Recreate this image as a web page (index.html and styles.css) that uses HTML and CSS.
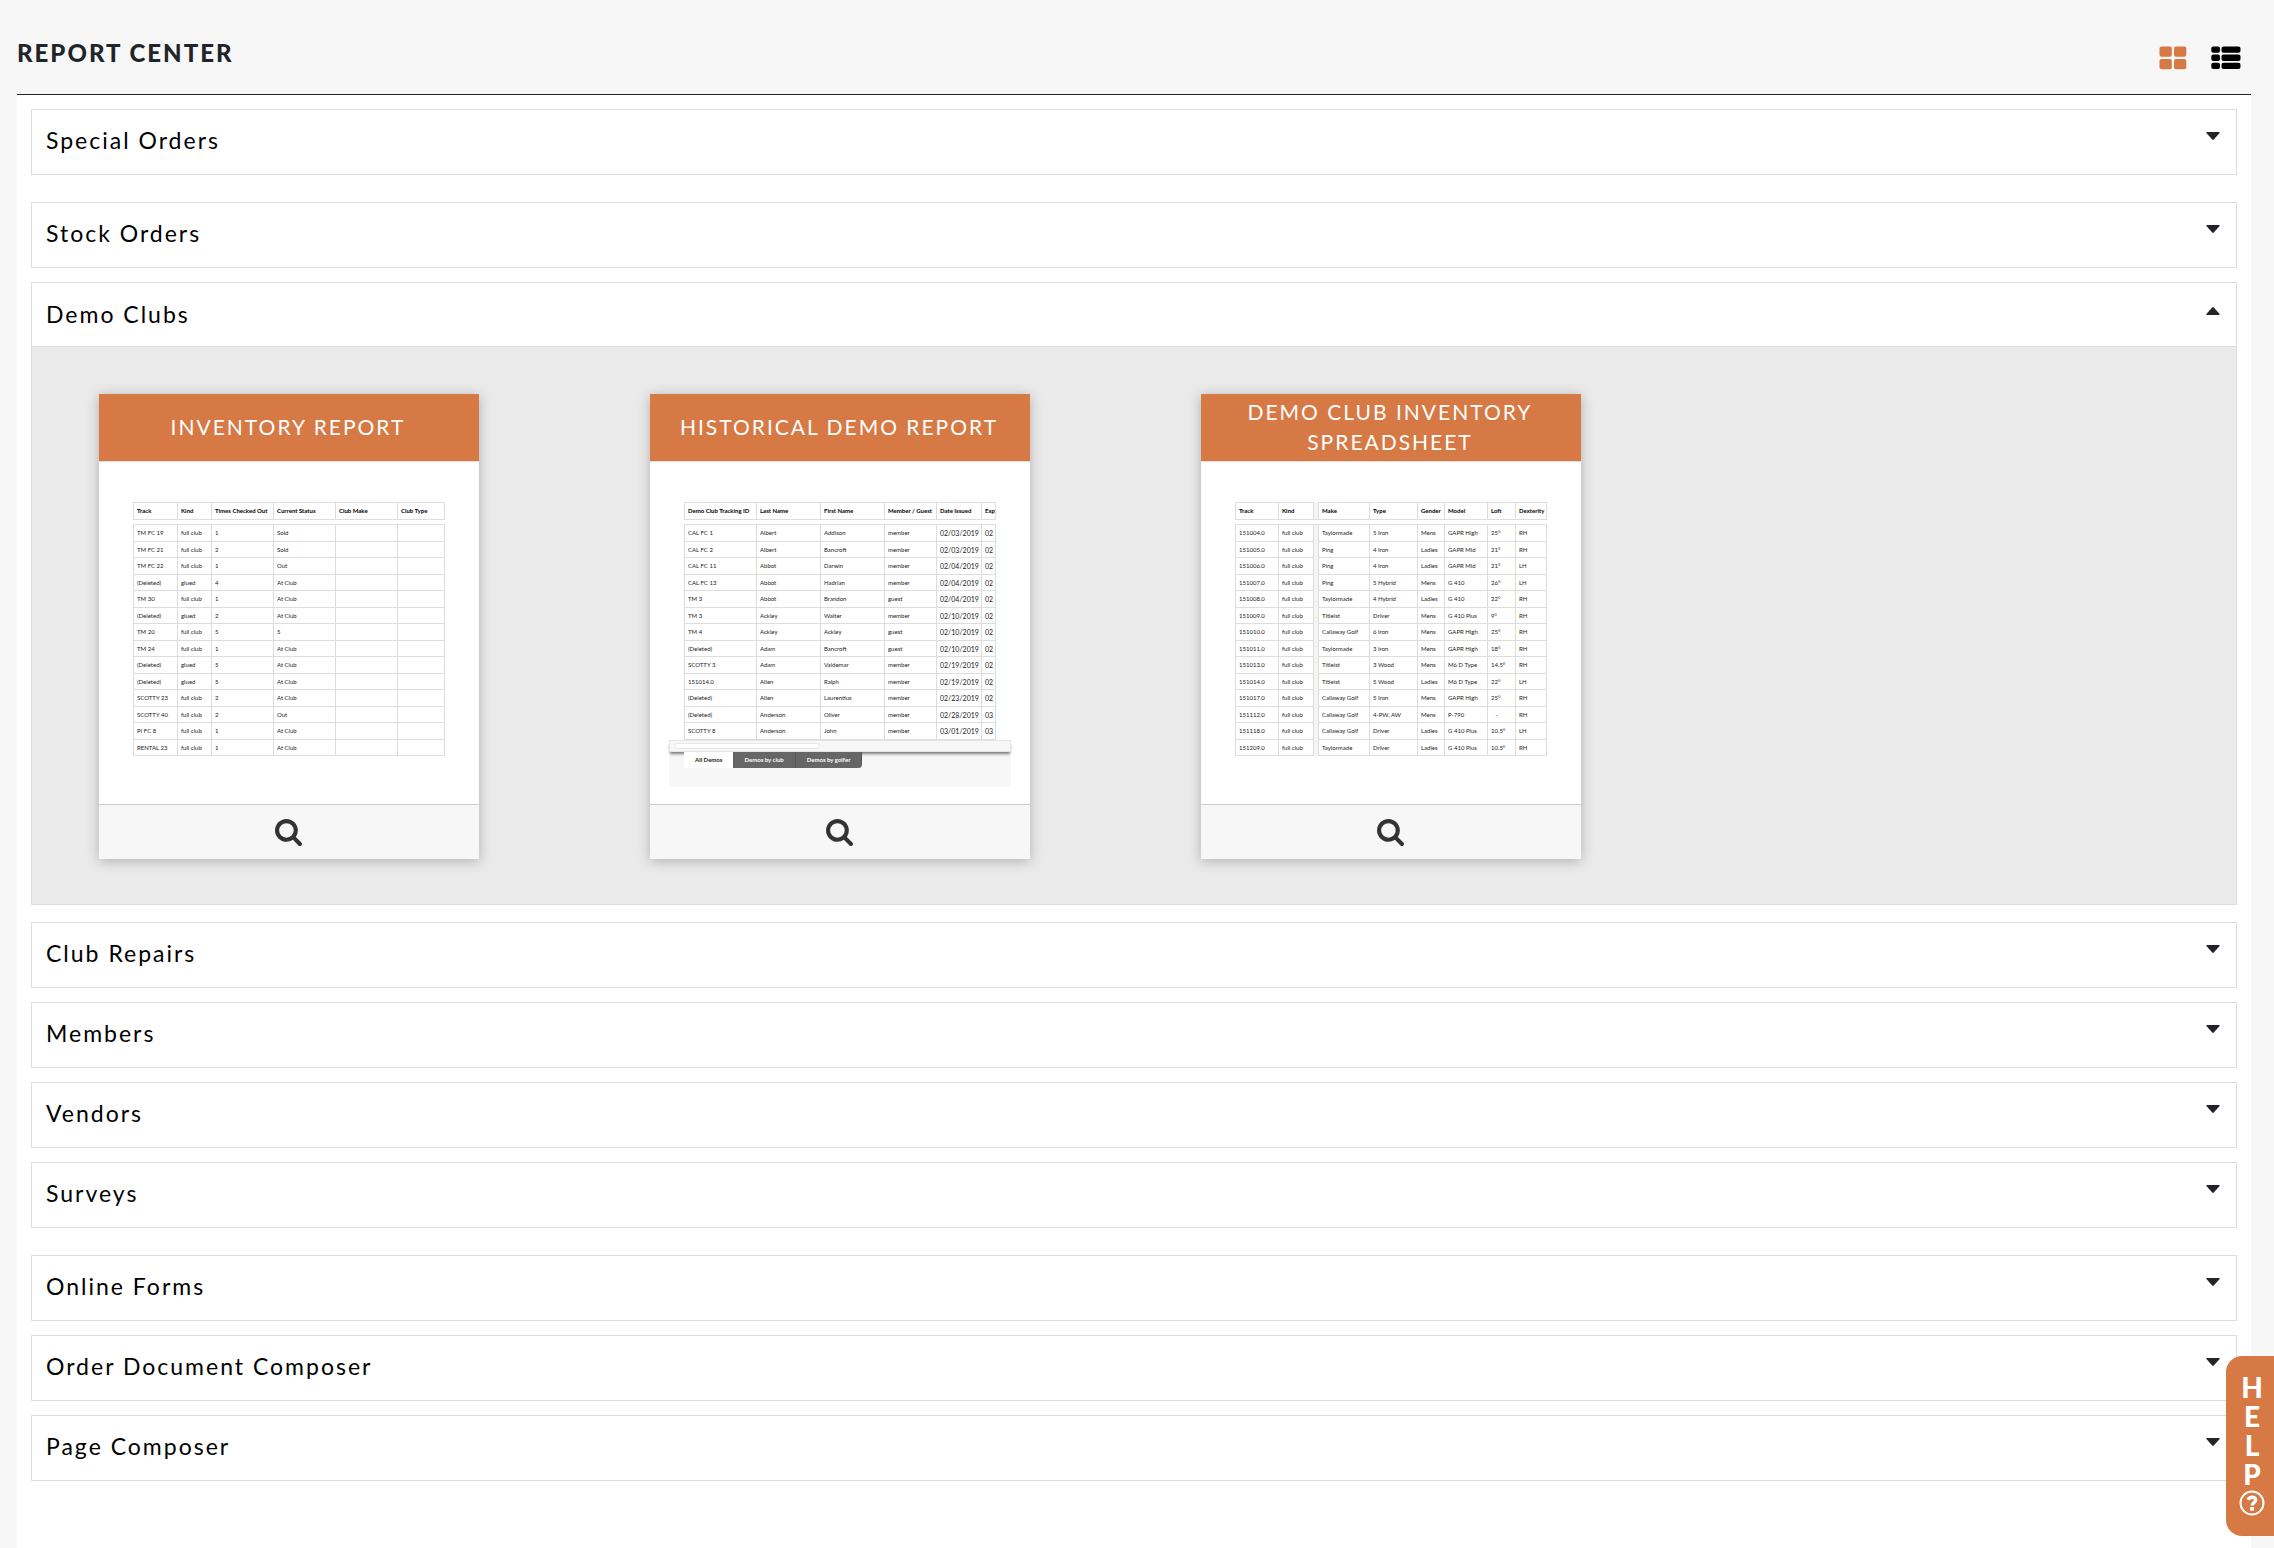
FILE: index.html
```html
<!DOCTYPE html>
<html lang="en">
<head>
<meta charset="utf-8">
<meta name="viewport" content="width=device-width, initial-scale=1">
<title>Report Center</title>
<link rel="stylesheet" href="styles.css">
</head>
<body>
<svg class="sprite" aria-hidden="true">
  <symbol id="caret-down" viewBox="0 0 14 9"><path d="M1 0h12q1 0 .6 1L7.800 7.600q-.8.8-1.600 0L.4 1Q0 0 1 0z"/></symbol>
  <symbol id="caret-up" viewBox="0 0 14 9"><path d="M1 9h12q1 0 .6-1L7.800 1.400q-.8-.8-1.600 0L.4 8Q0 9 1 9z"/></symbol>
  <symbol id="search" viewBox="0 0 1664 1664"><path d="M1152 704q0-185-131.500-316.500t-316.500-131.500-316.500 131.500-131.500 316.500 131.500 316.500 316.500 131.500 316.500-131.500 131.500-316.500zm512 832q0 52-38 90t-90 38q-54 0-90-38l-343-342q-179 124-399 124-143 0-273.500-55.500t-225-150-150-225-55.500-273.500 55.500-273.500 150-225 225-150 273.500-55.500 273.500 55.500 225 150 150 225 55.500 273.500q0 220-124 399l343 343q37 37 37 90z"/></symbol>
</svg>
<main class="page">
  <header class="page-header">
    <h1>REPORT CENTER</h1>
    <div class="views">
      <button class="view view-active" type="button" aria-label="Grid view">
        <svg width="28" height="24" viewBox="0 0 28 24"><rect x=".5" y=".5" width="12.300" height="10.300" rx="2"/><rect x="15" y=".5" width="12.300" height="10.300" rx="2"/><rect x=".5" y="13" width="12.300" height="10.300" rx="2"/><rect x="15" y="13" width="12.300" height="10.300" rx="2"/></svg>
      </button>
      <button class="view" type="button" aria-label="List view">
        <svg width="30" height="24" viewBox="0 0 30 24"><rect x=".3" y=".5" width="8.700" height="6.300" rx="2"/><rect x="10.500" y=".5" width="19" height="6.300" rx="2"/><rect x=".3" y="8.600" width="8.700" height="6.300" rx="2"/><rect x="10.500" y="8.600" width="19" height="6.300" rx="2"/><rect x=".3" y="16.800" width="8.700" height="6.300" rx="2"/><rect x="10.500" y="16.800" width="19" height="6.300" rx="2"/></svg>
      </button>
    </div>
  </header>
  <div class="sections">
    <section class="section group-end"><button class="toggle" type="button" aria-expanded="false">Special Orders<svg class="caret"><use href="#caret-down"/></svg></button></section>
    <section class="section"><button class="toggle" type="button" aria-expanded="false">Stock Orders<svg class="caret"><use href="#caret-down"/></svg></button></section>
    <section class="section section-open">
      <button class="toggle" type="button" aria-expanded="true">Demo Clubs<svg class="caret"><use href="#caret-up"/></svg></button>
      <div class="reports">
        <article class="card">
          <h2>INVENTORY REPORT</h2>
          <div class="preview">
            <table class="sheet inventory">
              <colgroup><col><col><col><col><col><col></colgroup>
              <thead><tr><th>Track<th>Kind<th>Times Checked Out<th>Current Status<th>Club Make<th>Club Type</thead>
              <tbody class="spacer"><tr><td colspan="6"></tbody>
              <tbody>
                <tr><td>TM FC 19<td>full club<td>1<td>Sold<td><td>
                <tr><td>TM FC 21<td>full club<td>2<td>Sold<td><td>
                <tr><td>TM FC 22<td>full club<td>1<td>Out<td><td>
                <tr><td>(Deleted)<td>glued<td>4<td>At Club<td><td>
                <tr><td>TM 30<td>full club<td>1<td>At Club<td><td>
                <tr><td>(Deleted)<td>glued<td>2<td>At Club<td><td>
                <tr><td>TM 20<td>full club<td>5<td>5<td><td>
                <tr><td>TM 24<td>full club<td>1<td>At Club<td><td>
                <tr><td>(Deleted)<td>glued<td>5<td>At Club<td><td>
                <tr><td>(Deleted)<td>glued<td>5<td>At Club<td><td>
                <tr><td>SCOTTY 23<td>full club<td>2<td>At Club<td><td>
                <tr><td>SCOTTY 40<td>full club<td>2<td>Out<td><td>
                <tr><td>PI FC 8<td>full club<td>1<td>At Club<td><td>
                <tr><td>RENTAL 23<td>full club<td>1<td>At Club<td><td>
              </tbody>
            </table>
          </div>
          <button class="open" type="button" aria-label="View inventory report"><svg class="lens"><use href="#search"/></svg></button>
        </article>
        <article class="card">
          <h2>HISTORICAL DEMO REPORT</h2>
          <div class="preview">
            <table class="sheet history">
              <colgroup><col><col><col><col><col><col></colgroup>
              <thead><tr><th>Demo Club Tracking ID<th>Last Name<th>First Name<th>Member / Guest<th>Date Issued<th>Exp</thead>
              <tbody class="spacer"><tr><td colspan="6"></tbody>
              <tbody>
                <tr><td>CAL FC 1<td>Albert<td>Addison<td>member<td>02/03/2019<td>02
                <tr><td>CAL FC 2<td>Albert<td>Bancroft<td>member<td>02/03/2019<td>02
                <tr><td>CAL FC 11<td>Abbot<td>Darwin<td>member<td>02/04/2019<td>02
                <tr><td>CAL FC 13<td>Abbot<td>Hadrian<td>member<td>02/04/2019<td>02
                <tr><td>TM 3<td>Abbot<td>Brandon<td>guest<td>02/04/2019<td>02
                <tr><td>TM 3<td>Ackley<td>Walter<td>member<td>02/10/2019<td>02
                <tr><td>TM 4<td>Ackley<td>Ackley<td>guest<td>02/10/2019<td>02
                <tr><td>(Deleted)<td>Adam<td>Bancroft<td>guest<td>02/10/2019<td>02
                <tr><td>SCOTTY 3<td>Adam<td>Valdemar<td>member<td>02/19/2019<td>02
                <tr><td>151014.0<td>Allen<td>Ralph<td>member<td>02/19/2019<td>02
                <tr><td>(Deleted)<td>Allen<td>Laurentius<td>member<td>02/23/2019<td>02
                <tr><td>(Deleted)<td>Anderson<td>Oliver<td>member<td>02/28/2019<td>03
                <tr><td>SCOTTY 8<td>Anderson<td>John<td>member<td>03/01/2019<td>03
              </tbody>
            </table>
            <div class="sheet-foot">
              <div class="scrollbar"><div class="thumb"></div></div>
              <div class="tabs"><span class="tab tab-active">All Demos</span><span class="tab">Demos by club</span><span class="tab">Demos by golfer</span></div>
            </div>
          </div>
          <button class="open" type="button" aria-label="View historical demo report"><svg class="lens"><use href="#search"/></svg></button>
        </article>
        <article class="card">
          <h2>DEMO CLUB INVENTORY SPREADSHEET</h2>
          <div class="preview">
            <table class="sheet clubs">
              <colgroup><col><col><col><col><col><col><col><col><col></colgroup>
              <thead><tr><th>Track<th>Kind<th class="gutter"><th>Make<th>Type<th>Gender<th>Model<th>Loft<th>Dexterity</thead>
              <tbody class="spacer"><tr><td colspan="9"></tbody>
              <tbody>
                <tr><td>151004.0<td>full club<td class="gutter"><td>Taylormade<td>5 Iron<td>Mens<td>GAPR High<td>25°<td>RH
                <tr><td>151005.0<td>full club<td class="gutter"><td>Ping<td>4 Iron<td>Ladies<td>GAPR Mid<td>21°<td>RH
                <tr><td>151006.0<td>full club<td class="gutter"><td>Ping<td>4 Iron<td>Ladies<td>GAPR Mid<td>21°<td>LH
                <tr><td>151007.0<td>full club<td class="gutter"><td>Ping<td>5 Hybrid<td>Mens<td>G 410<td>26°<td>LH
                <tr><td>151008.0<td>full club<td class="gutter"><td>Taylormade<td>4 Hybrid<td>Ladies<td>G 410<td>22°<td>RH
                <tr><td>151009.0<td>full club<td class="gutter"><td>Titleist<td>Driver<td>Mens<td>G 410 Plus<td>9°<td>RH
                <tr><td>151010.0<td>full club<td class="gutter"><td>Callaway Golf<td>6 Iron<td>Mens<td>GAPR High<td>25°<td>RH
                <tr><td>151011.0<td>full club<td class="gutter"><td>Taylormade<td>3 Iron<td>Mens<td>GAPR High<td>18°<td>RH
                <tr><td>151013.0<td>full club<td class="gutter"><td>Titleist<td>3 Wood<td>Mens<td>M6 D Type<td>14.5°<td>RH
                <tr><td>151014.0<td>full club<td class="gutter"><td>Titleist<td>5 Wood<td>Ladies<td>M6 D Type<td>22°<td>LH
                <tr><td>151017.0<td>full club<td class="gutter"><td>Callaway Golf<td>5 Iron<td>Mens<td>GAPR High<td>25°<td>RH
                <tr><td>151112.0<td>full club<td class="gutter"><td>Callaway Golf<td>4-PW, AW<td>Mens<td>P-790<td>&nbsp;&nbsp; -<td>RH
                <tr><td>151118.0<td>full club<td class="gutter"><td>Callaway Golf<td>Driver<td>Ladies<td>G 410 Plus<td>10.5°<td>LH
                <tr><td>151209.0<td>full club<td class="gutter"><td>Taylormade<td>Driver<td>Ladies<td>G 410 Plus<td>10.5°<td>RH
              </tbody>
            </table>
          </div>
          <button class="open" type="button" aria-label="View demo club inventory spreadsheet"><svg class="lens"><use href="#search"/></svg></button>
        </article>
      </div>
    </section>
    <section class="section"><button class="toggle" type="button" aria-expanded="false">Club Repairs<svg class="caret"><use href="#caret-down"/></svg></button></section>
    <section class="section"><button class="toggle" type="button" aria-expanded="false">Members<svg class="caret"><use href="#caret-down"/></svg></button></section>
    <section class="section"><button class="toggle" type="button" aria-expanded="false">Vendors<svg class="caret"><use href="#caret-down"/></svg></button></section>
    <section class="section group-end"><button class="toggle" type="button" aria-expanded="false">Surveys<svg class="caret"><use href="#caret-down"/></svg></button></section>
    <section class="section"><button class="toggle" type="button" aria-expanded="false">Online Forms<svg class="caret"><use href="#caret-down"/></svg></button></section>
    <section class="section"><button class="toggle" type="button" aria-expanded="false">Order Document Composer<svg class="caret"><use href="#caret-down"/></svg></button></section>
    <section class="section"><button class="toggle" type="button" aria-expanded="false">Page Composer<svg class="caret"><use href="#caret-down"/></svg></button></section>
  </div>
</main>
<button class="help" type="button">
  <span>H</span><span>E</span><span>L</span><span>P</span>
  <svg width="26" height="26" viewBox="0 0 26 26" fill="none" stroke="#fff"><circle cx="13" cy="13" r="11.500" stroke-width="2"/><path d="M9 9.800Q10.200 7.200 13.100 7.200q3.500 0 3.500 2.900 0 1.600-1.700 2.600-1.700.9-1.700 2.800" stroke-width="3.400"/><path d="M13.100 17v3.600" stroke-width="3.800"/></svg>
</button>
</body>
</html>
```
FILE: styles.css
```css
* { box-sizing: border-box; }

body {
  margin: 0;
  background: #f7f7f7;
  color: #212529;
  font-family: Lato, "Open Sans", sans-serif;
}

button {
  margin: 0;
  padding: 0;
  border: 0;
  background: none;
  color: inherit;
  font: inherit;
  cursor: pointer;
}

svg { display: block; }
.sprite { position: absolute; width: 0; height: 0; }

.page {
  display: flex;
  flex-direction: column;
  min-height: 100vh;
  padding: 0 23px 0 17px;
}

.page-header {
  display: flex;
  justify-content: space-between;
  align-items: flex-start;
  height: 95px;
  padding: 38px 10px 0 0;
  border-bottom: 1px solid #212529;
}

h1 {
  margin: 0;
  font-size: 24px;
  font-weight: 900;
  line-height: 30px;
  letter-spacing: 2px;
}

.views { display: flex; gap: 24px; padding-top: 8px; }
.view { color: #000; }
.view svg { fill: currentColor; }
.view-active { color: #d67944; }

.sections {
  flex: 1;
  padding: 14px 14px 52px;
  background: #fff;
}

.section {
  margin-bottom: 14px;
  border: 1px solid #ddd;
}
.group-end { margin-bottom: 27px; }
.section-open { margin-bottom: 17px; }

.toggle {
  display: flex;
  justify-content: space-between;
  align-items: flex-start;
  width: 100%;
  height: 64px;
  padding: 16px 16px 0 14px;
  color: #000;
  font-size: 23px;
  line-height: 28px;
  letter-spacing: 2px;
}
.section-open .toggle { height: 63px; padding-top: 17px; }

.caret {
  width: 14px;
  height: 9px;
  margin-top: 6px;
  fill: #212529;
}

.reports {
  display: grid;
  grid-template-columns: repeat(4, minmax(0, 1fr));
  padding: 47px 0 45px;
  border-top: 1px solid #ddd;
  background: #eaeaea;
}

.card {
  margin: 0 104px 0 67px;
  background: #fff;
  box-shadow: 0 2px 12px rgba(0, 0, 0, .25);
}

.card h2 {
  display: flex;
  align-items: center;
  justify-content: center;
  height: 68px;
  margin: 0;
  padding: 0 26px 2px 24px;
  border-bottom: 1px solid #ddd;
  background: #d67944;
  color: #fff;
  font-size: 21px;
  font-weight: 400;
  line-height: 30px;
  letter-spacing: 2px;
  text-align: center;
}

.preview { height: 342px; padding: 40px 19px 0; }

.open {
  display: flex;
  justify-content: center;
  align-items: center;
  width: 100%;
  height: 55px;
  padding-right: 2px;
  border-top: 1px solid #ccc;
  background: #f7f7f7;
}
.lens { width: 27px; height: 27px; fill: #333; }

/* Miniature spreadsheets */
.sheet {
  width: calc(100% - 30px);
  margin: 0 15px;
  border-collapse: collapse;
  table-layout: fixed;
  color: #222;
  font-size: 6px;
  line-height: 8px;
  white-space: nowrap;
}
.sheet th, .sheet td {
  height: 17px;
  padding: 0 3px;
  overflow: hidden;
  border: 1px solid #ddd;
  text-align: left;
}
.sheet th { color: #000; font-weight: 700; }
.sheet tbody tr:nth-child(even) td { height: 16px; }
.sheet .spacer td { height: 5px; border-width: 1px 0; }
.sheet .gutter { padding: 0; border-top: 0; border-bottom: 0; background: #f5f5f5; }

.inventory col:nth-child(1) { width: 44px; }
.inventory col:nth-child(2) { width: 34px; }
.inventory col:nth-child(3) { width: 62px; }
.inventory col:nth-child(4) { width: 62px; }
.inventory col:nth-child(5) { width: 62px; }

.history col:nth-child(1) { width: 72px; }
.history col:nth-child(2) { width: 64px; }
.history col:nth-child(3) { width: 64px; }
.history col:nth-child(4) { width: 52px; }
.history col:nth-child(5) { width: 45px; }
.history td:nth-child(n+5) { font-size: 7px; }
.history :is(th, td):nth-child(6) { padding-right: 0; }

.clubs col:nth-child(1) { width: 43px; }
.clubs col:nth-child(2) { width: 35px; }
.clubs col:nth-child(3) { width: 5px; }
.clubs col:nth-child(4) { width: 51px; }
.clubs col:nth-child(5) { width: 48px; }
.clubs col:nth-child(6) { width: 27px; }
.clubs col:nth-child(7) { width: 43px; }
.clubs col:nth-child(8) { width: 28px; }

.sheet-foot { height: 47px; background: #f7f7f7; }
.scrollbar {
  height: 12px;
  padding: 2px 4px;
  border: 1px solid #e5e5e5;
  background: #f7f7f7;
  box-shadow: 0 3px 3px -1px rgba(0, 0, 0, .5);
}
.thumb {
  width: 44%;
  height: 6px;
  border: 1px solid #e8e8e8;
  border-radius: 3px;
  background: #fff;
}
.tabs { display: flex; margin-left: 15px; }
.tab {
  padding: 4px 11px;
  border-right: 1px solid #555;
  background: #666;
  color: #fff;
  font-size: 6px;
  font-weight: 700;
  line-height: 8px;
}
.tab:last-child { border-radius: 0 0 4px 0; }
.tab-active {
  border: 0;
  border-radius: 0 0 3px 3px;
  background: #fff;
  color: #222;
}

.help {
  position: fixed;
  right: 0;
  bottom: 12px;
  display: flex;
  flex-direction: column;
  align-items: center;
  width: 48px;
  height: 180px;
  padding: 17px 0 0 4px;
  border-radius: 16px 0 0 16px;
  background: #d67944;
  color: #fff;
  font-size: 28px;
  font-weight: 900;
  line-height: 29px;
}
.help svg { margin-top: 1px; }
```
